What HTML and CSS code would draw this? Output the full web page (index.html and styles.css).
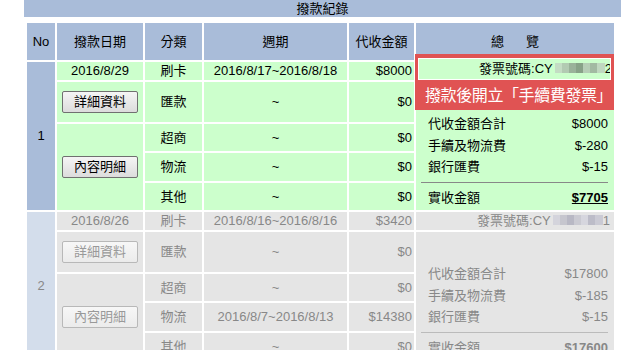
FILE: index.html
```html
<!DOCTYPE html>
<html lang="zh-Hant">
<head>
<meta charset="utf-8">
<title>撥款紀錄</title>
<link rel="stylesheet" href="styles.css">
</head>
<body>
<div class="title">撥款紀錄</div>
<table class="rec">
  <colgroup>
    <col class="c-no"><col class="c-date"><col class="c-cat"><col class="c-per"><col class="c-amt"><col class="c-sum">
  </colgroup>
  <thead>
    <tr class="hd">
      <th>No</th><th>撥款日期</th><th>分類</th><th>週期</th><th>代收金額</th><th>總<span class="sp"></span>覽</th>
    </tr>
  </thead>
  <tbody class="cur">
    <tr class="r1">
      <td rowspan="5" class="no">1</td>
      <td>2016/8/29</td>
      <td>刷卡</td>
      <td>2016/8/17~2016/8/18</td>
      <td class="amt">$8000</td>
      <td class="inv-cell">
        <div class="callout">
          <div class="inv-box"><span class="inv-txt">發票號碼:CY<span class="blur blur-g"></span>2</span></div>
          <div class="note">撥款後開立「手續費發票」</div>
        </div>
      </td>
    </tr>
    <tr class="r2">
      <td><button class="btn" type="button">詳細資料</button></td>
      <td>匯款</td>
      <td>~</td>
      <td class="amt">$0</td>
      <td rowspan="4" class="sum-cell">
        <div class="sum">
          <div class="sl"><span>代收金額合計</span><span>$8000</span></div>
          <div class="sl"><span>手續及物流費</span><span>$-280</span></div>
          <div class="sl"><span>銀行匯費</span><span>$-15</span></div>
          <div class="rule"></div>
          <div class="sl"><span>實收金額</span><span class="tot">$7705</span></div>
        </div>
      </td>
    </tr>
    <tr class="r3">
      <td rowspan="3"><button class="btn" type="button">內容明細</button></td>
      <td>超商</td>
      <td>~</td>
      <td class="amt">$0</td>
    </tr>
    <tr class="r4">
      <td>物流</td>
      <td>~</td>
      <td class="amt">$0</td>
    </tr>
    <tr class="r5">
      <td>其他</td>
      <td>~</td>
      <td class="amt">$0</td>
    </tr>
  </tbody>
  <tbody class="old">
    <tr class="r1">
      <td rowspan="5" class="no">2</td>
      <td>2016/8/26</td>
      <td>刷卡</td>
      <td>2016/8/16~2016/8/16</td>
      <td class="amt">$3420</td>
      <td class="inv-plain">發票號碼:CY<span class="blur blur-w"></span>1</td>
    </tr>
    <tr class="r2">
      <td><button class="btn" type="button">詳細資料</button></td>
      <td>匯款</td>
      <td>~</td>
      <td class="amt">$0</td>
      <td rowspan="4" class="sum-cell">
        <div class="sum">
          <div class="sl"><span>代收金額合計</span><span>$17800</span></div>
          <div class="sl"><span>手續及物流費</span><span>$-185</span></div>
          <div class="sl"><span>銀行匯費</span><span>$-15</span></div>
          <div class="rule"></div>
          <div class="sl"><span>實收金額</span><span class="tot">$17600</span></div>
        </div>
      </td>
    </tr>
    <tr class="r3">
      <td rowspan="3"><button class="btn" type="button">內容明細</button></td>
      <td>超商</td>
      <td>~</td>
      <td class="amt">$0</td>
    </tr>
    <tr class="r4">
      <td>物流</td>
      <td>2016/8/7~2016/8/13</td>
      <td class="amt">$14380</td>
    </tr>
    <tr class="r5">
      <td>其他</td>
      <td>~</td>
      <td class="amt">$0</td>
    </tr>
  </tbody>
</table>
</body>
</html>
```

FILE: styles.css
```css
html, body {
  overflow: hidden;
}
body {
  margin: 0;
  background: #fff;
  color: #000;
  font: 13px/16px "Liberation Sans", "Noto Sans CJK TC", sans-serif;
}
.title {
  margin-left: 24px;
  width: 597px;
  height: 17px;
  line-height: 17px;
  background: #a9bcd9;
  text-align: center;
}
.rec {
  margin: 4px 0 0 25px;
  width: 591px;
  table-layout: fixed;
  border-collapse: separate;
  border-spacing: 2px;
}
.c-no { width: 28px; }
.c-date { width: 86px; }
.c-cat { width: 57px; }
.c-per { width: 143px; }
.c-amt { width: 65px; }
.c-sum { width: 198px; }

th, td {
  padding: 0;
  text-align: center;
  vertical-align: middle;
  white-space: nowrap;
}
th {
  background: #a9bcd9;
  font-weight: normal;
}
.hd { height: 37px; }
.sp {
  display: inline-block;
  width: 22px;
}
.r1 { height: 18px; }
.r2 { height: 40px; }
.r3 { height: 27px; }
.r4 { height: 28px; }
.r5 { height: 27px; }

.cur td { background: #ccffcc; }
.cur td.no { background: #a9bcd9; }
.old td { background: #e5e5e5; color: #888; }
.old td.no { background: #d3ddeb; }

.amt {
  text-align: right;
  padding-right: 2px;
}

.btn {
  display: block;
  margin: 0 auto;
  width: 76px;
  height: 22px;
  padding: 0;
  font: inherit;
  color: #000;
  background: linear-gradient(#f5f5f5, #dcdcdc);
  border: 1px solid #707070;
  border-radius: 2px;
}
.old .btn {
  color: #999;
  border-color: #b8b8b8;
  background: linear-gradient(#f7f7f7, #ebebeb);
}

.inv-cell {
  position: relative;
}
.callout {
  position: absolute;
  left: -1px;
  top: -8px;
  width: 199px;
  height: 56px;
  box-sizing: border-box;
  padding: 4px 3px 0;
  background: #e05353;
  z-index: 1;
}
.inv-box {
  height: 22px;
  box-sizing: border-box;
  border: 1px solid #fff;
  background: #ccffcc;
  line-height: 20px;
  text-align: right;
  white-space: nowrap;
  overflow: hidden;
}
.inv-txt {
  margin-right: -2px;
}
.note {
  padding: 2px 0 0 7px;
  color: #fff;
  font-size: 16px;
  letter-spacing: -0.4px;
  line-height: 28px;
  text-align: left;
  white-space: nowrap;
}
.inv-plain {
  text-align: right;
  padding-right: 4px;
}
.blur {
  display: inline-block;
  width: 50px;
  height: 10px;
  margin-left: 2px;
}
.blur-g {
  background: linear-gradient(90deg,
    #c4dcc4 0 7px, #b2cab2 7px 14px, #9ab29a 14px 21px, #88a288 21px 28px,
    #b6ceb6 28px 35px, #a2baa2 35px 42px, #c0d8c0 42px 50px);
}
.blur-w {
  background: linear-gradient(90deg,
    #d4d4dc 0 7px, #c6c6ce 7px 14px, #b8b8c4 14px 21px, #cacad2 21px 28px,
    #d6d6de 28px 35px, #bcbcc8 35px 42px, #cacad4 42px 50px);
}

.sum-cell {
  vertical-align: top;
  padding: 31px 6px 0 5px;
  text-align: left;
}
.sl {
  display: flex;
  justify-content: space-between;
  padding-left: 7px;
  line-height: 21.5px;
}
.sl:last-child {
  line-height: 21px;
}
.rule {
  margin: 4px 0;
  border-top: 1px solid #888;
}
.old .rule {
  border-top-color: #bbb;
}
.tot {
  font-weight: bold;
  text-decoration: underline;
}
```
